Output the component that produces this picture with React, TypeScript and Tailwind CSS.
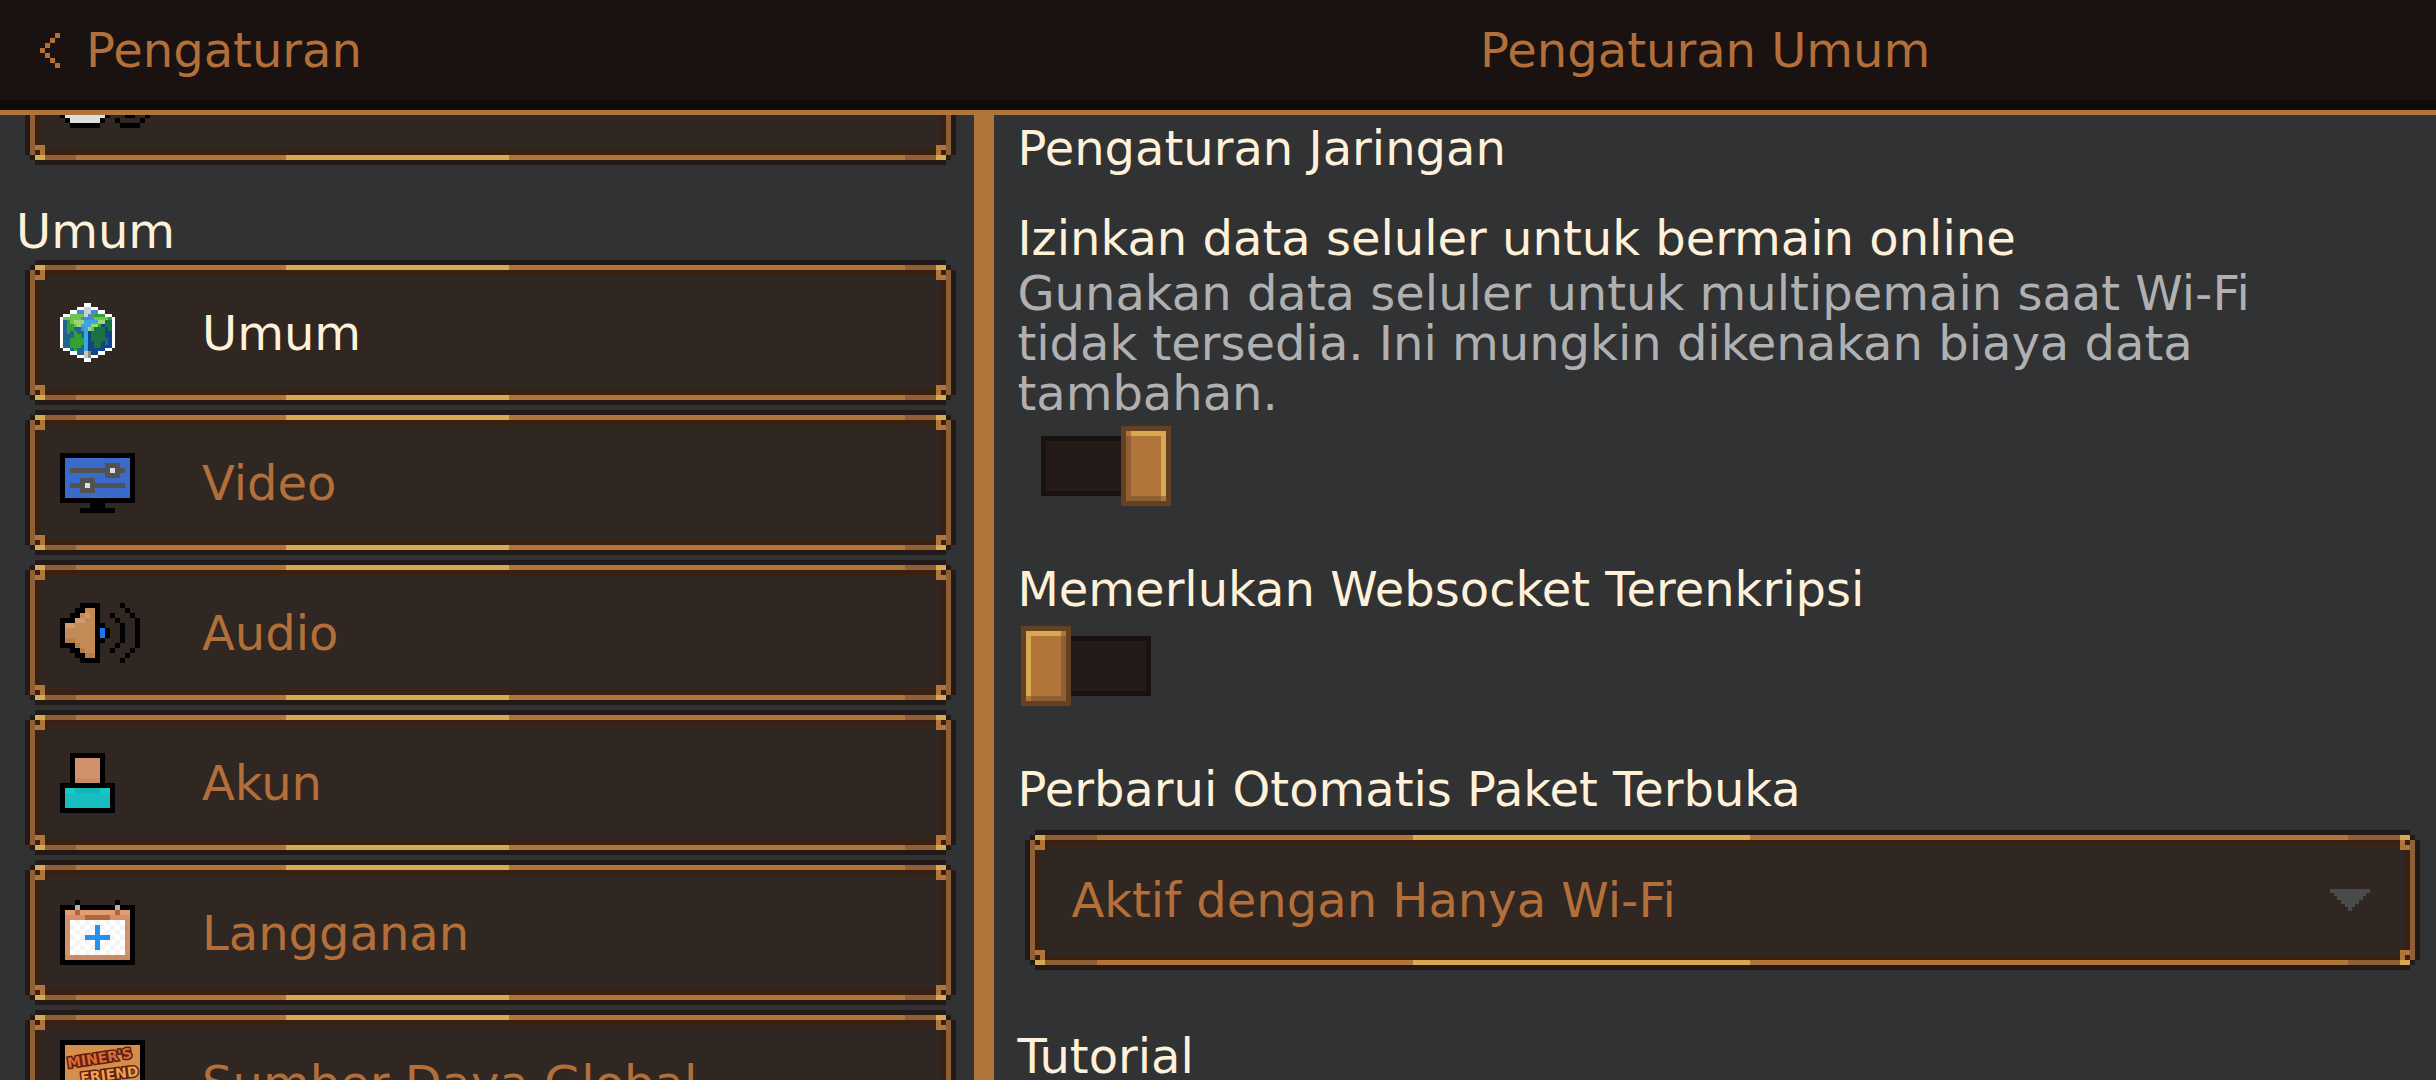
import { useId, useState } from "react";
import type { ReactNode } from "react";

const palette: Record<string, string> = {
  K: "#000000",
  W: "#ffffff",
  w: "#dedede",
  f: "#f5f4f3",
  b: "#3a6bcb",
  g: "#525252",
  o: "#c28a55",
  h: "#cf9b6e",
  d: "#b87c47",
  B: "#1a78f5",
  s: "#d2916d",
  S: "#c88b66",
  t: "#16bfbe",
  T: "#18c8c4",
  u: "#14b7b6",
  a: "#b3b3b3",
  n: "#ad683c",
  O: "#e39d70",
  p: "#2490f0",
};

const globePalette: Record<string, string> = {
  W: "#ffffff",
  L: "#c2d4d4",
  B: "#4f87cc",
  g: "#6cc552",
  G: "#33a036",
  D: "#1d7044",
  T: "#22648f",
  p: "#9fd672",
  c: "#3ba7e0",
  N: "#11458a",
  S: "#c6c6c6",
  s: "#888888",
};

const profileRows = [
  "..KKKKKK..........",
  ".KwwwwwwK.........",
  "KwwwwwwwwK........",
  "KwwwwwwwwK........",
  "KwwwwwwwwK........",
  ".KwwwwwwK.........",
  "..KKKKKK..........",
  "..KwwwwK....KKKK..",
  ".KwwwwwwK..K....K.",
  "KwwwwwwwwK.K.KK..K",
  "KwwwwwwwwK.K.KK..K",
  "KwwwwwwwwK...KK..K",
  ".KwwwwwwK..K....K.",
  "..KKKKKK....KKKK..",
];

const globeRows = [
  ".......WW.......",
  ".....WWLLWW.....",
  "...WWBBLLBBWW...",
  ".WWggggLBBGGGWW.",
  "WgggggBBBBggggGW",
  "WTGgpppccccppDDW",
  "WTGGgpcccppGNDDW",
  "WTGGTTBcpgDDDNDW",
  "WTGTGTTcNDDDDNNW",
  "WTTTGGTcNDDDDNNW",
  "WTTGGGGcNDDDDTNW",
  "WTTGGGGcNNDDNTNW",
  "WTTGGGTcNNDDNNNW",
  ".WWTGTTcNNNNNWW.",
  "...WWTTSsNNWW...",
  ".....WWSsWW.....",
  ".......WW.......",
];

const videoRows = [
  "KKKKKKKKKKKKKKK",
  "KbbbbbbbbbbbbbK",
  "KbbbbbbbbgggbbK",
  "KbggggggggwggbK",
  "KbbbbbbbbgggbbK",
  "KbbbgggbbbbbbbK",
  "KbgggwgggggggbK",
  "KbbbgggbbbbbbbK",
  "KbbbbbbbbbbbbbK",
  "KKKKKKKKKKKKKKK",
  "......KKK......",
  "....KKKKKKK....",
];

const audioRows = [
  "....KKKK....K...",
  "...KKooK.....K..",
  "..KKohoK..K...K.",
  "KKKhhooK...K...K",
  "KhhooooKK...K..K",
  "KooooooKBK..K..K",
  "KooooooKBK..K..K",
  "KddooooKK...K..K",
  "KKKdoooK...K...K",
  "..KKdooK..K...K.",
  "...KKddK.....K..",
  "....KKKK....K...",
];

const accountRows = [
  "..KKKKKKK..",
  "..KsssssK..",
  "..KsssssK..",
  "..KsssssK..",
  "..KsssssK..",
  "..KSSSSSK..",
  "KKKKKKKKKKK",
  "KTTuuuuuTTK",
  "KtttttttttK",
  "KtttttttttK",
  "KtttttttttK",
  "KKKKKKKKKKK",
];

const subscriptionRows = [
  "...K.......K...",
  "KKKaKKKKKKKaKKK",
  "KOOnOOOOOOOnOOK",
  "KssssnnnnnssssK",
  "KsWfWfWfWfWfWsK",
  "KsfWfWfpfWfWfsK",
  "KsWfWfWpWfWfWsK",
  "KsfWfpppppfWfsK",
  "KsWfWfWpWfWfWsK",
  "KsfWfWfpfWfWfsK",
  "KsWfWfWfWfWfWsK",
  "KSSSSSSSSSSSSSK",
  "KKKKKKKKKKKKKKK",
];

const chevronRows = ["...x", "..x.", ".x..", "x...", ".x..", "..x.", "...x"];

function PixelIcon({
  rows,
  colors = palette,
  className,
}: {
  rows: string[];
  colors?: Record<string, string>;
  className: string;
}) {
  return (
    <svg
      className={className}
      viewBox={`0 0 ${rows[0].length} ${rows.length}`}
      shapeRendering="crispEdges"
      aria-hidden="true"
    >
      {rows.map((row, y) =>
        row.split("").map((cell, x) =>
          cell in colors ? (
            <rect key={`${x}-${y}`} x={x} y={y} width="1" height="1" fill={colors[cell]} />
          ) : null
        )
      )}
    </svg>
  );
}

function ResourcePackIcon() {
  return (
    <svg className="w-[85px] h-[85px]" viewBox="0 0 85 85" aria-hidden="true">
      <rect width="85" height="85" fill="#000" />
      <rect x="5" y="5" width="75" height="75" fill="#d58f4a" />
      <ellipse cx="40" cy="62" rx="30" ry="22" fill="#e9b25e" />
      <g
        fontFamily="'DejaVu Sans', sans-serif"
        fontWeight="bold"
        fontSize="14"
        stroke="#5c1f10"
        strokeWidth="3"
        paintOrder="stroke"
      >
        <text x="8" y="28" fill="#dd6a37" transform="rotate(-9 8 28)">
          MINER'S
        </text>
        <text x="21" y="43" fill="#f0a050" transform="rotate(-7 21 43)">
          FRIEND
        </text>
      </g>
      <path d="M66 50h4v-4h3v8h-7z" fill="#3f7d22" />
    </svg>
  );
}

function Corner({ className }: { className: string }) {
  return (
    <svg className={className} viewBox="0 0 2 3" shapeRendering="crispEdges" aria-hidden="true">
      <rect width="2" height="3" fill="#b27539" />
      <rect width="2" height="1" fill="#d8a953" />
      <rect y="1" width="1" height="1" fill="#3a2010" />
    </svg>
  );
}

// Copper frame: every layer shares one grid cell and is inset by its margin.
function Frame({ children }: { children: ReactNode }) {
  return (
    <span className="grid w-full h-full *:col-start-1 *:row-start-1">
      <span className="mx-[10px] bg-[#231a18]" />
      <span className="my-[10px] bg-[#231a18]" />
      <span className="m-[5px] bg-[#231a18]" />
      <span className="mx-[5px] my-[10px] bg-[#8f5f35]" />
      <span className="mx-[10px] my-[5px] bg-[linear-gradient(90deg,#8f5f35_4.5%,#b27539_4.5%,#b27539_27.5%,#d8a953_27.5%,#d8a953_52%,#b27539_52%,#b27539_95.5%,#8f5f35_95.5%)]" />
      <span className="m-[10px] bg-[#3a2010]" />
      <span className="m-[15px] bg-[#302622]" />
      <Corner className="w-[10px] h-[15px] mx-[10px] my-[5px]" />
      <Corner className="w-[10px] h-[15px] mx-[10px] my-[5px] justify-self-end -scale-x-100" />
      <Corner className="w-[10px] h-[15px] mx-[10px] my-[5px] self-end -scale-y-100" />
      <Corner className="w-[10px] h-[15px] mx-[10px] my-[5px] self-end justify-self-end -scale-100" />
      {children}
    </span>
  );
}

type Section = { name: string; icon: ReactNode };

const sections: Section[] = [
  { name: "Umum", icon: <PixelIcon rows={globeRows} colors={globePalette} className="w-[55px] h-[59px]" /> },
  { name: "Video", icon: <PixelIcon rows={videoRows} className="w-[75px] h-[60px]" /> },
  { name: "Audio", icon: <PixelIcon rows={audioRows} className="w-[80px] h-[60px]" /> },
  { name: "Akun", icon: <PixelIcon rows={accountRows} className="w-[55px] h-[60px]" /> },
  { name: "Langganan", icon: <PixelIcon rows={subscriptionRows} className="w-[75px] h-[65px]" /> },
  { name: "Sumber Daya Global", icon: <ResourcePackIcon /> },
];

function SectionButton({
  icon,
  name,
  active,
  onClick,
}: {
  icon: ReactNode;
  name?: string;
  active?: boolean;
  onClick?: () => void;
}) {
  return (
    <button
      type="button"
      className="block w-full h-[145px] shrink-0 text-left cursor-pointer"
      aria-label={name ? undefined : "Profil"}
      onClick={onClick}
    >
      <Frame>
        <span className="flex items-center pl-[35px]">
          <span className="w-[142px] shrink-0">{icon}</span>
          {name && <span className={active ? "text-[#fff1d9]" : "text-[#b26f3a]"}>{name}</span>}
        </span>
      </Frame>
    </button>
  );
}

function Toggle({ id, defaultChecked = false }: { id: string; defaultChecked?: boolean }) {
  const [checked, setChecked] = useState(defaultChecked);

  return (
    <span className="grid w-[150px] h-[80px] *:col-start-1 *:row-start-1">
      <svg
        className={checked ? "w-full h-full -scale-x-100" : "w-full h-full"}
        viewBox="0 0 30 16"
        shapeRendering="crispEdges"
        aria-hidden="true"
      >
        <rect x="6" y="2" width="20" height="12" fill="#1a1210" />
        <rect x="7" y="3" width="18" height="10" fill="#241a18" />
        <rect width="10" height="16" fill="#654122" />
        <rect x="1" y="1" width="8" height="14" fill="#b27539" />
        <rect x="1" y="1" width="7" height="1" fill="#d8a953" />
        <rect x="1" y="1" width="1" height="13" fill="#d8a953" />
        <rect x="8" y="2" width="1" height="13" fill="#8f5f35" />
        <rect x="2" y="14" width="7" height="1" fill="#8f5f35" />
      </svg>
      <input
        id={id}
        type="checkbox"
        role="switch"
        className="w-full h-full opacity-0 cursor-pointer"
        checked={checked}
        onChange={(e) => setChecked(e.target.checked)}
      />
    </span>
  );
}

export default function App() {
  const [active, setActive] = useState("Umum");
  const id = useId();

  return (
    <div className="h-screen flex flex-col overflow-hidden bg-[#303234] font-['DejaVu_Sans',sans-serif] text-[48px] leading-[50px] text-[#fff1d9]">
      <header className="shrink-0 flex bg-[#1a1210] border-b-5 border-[#b27539] text-[#b26f3a]">
        <div className="w-2/5 border-b-10 border-[#0f0b09]">
          <button type="button" className="h-[100px] pl-[40px] flex items-center gap-[26px] cursor-pointer">
            <PixelIcon rows={chevronRows} colors={{ x: "#b26f3a" }} className="w-[20px] h-[35px]" />
            Pengaturan
          </button>
        </div>
        <h1 className="flex-1 h-[110px] flex items-center justify-center border-b-10 border-[#0f0b09]">
          Pengaturan Umum
        </h1>
      </header>

      <div className="flex-1 min-h-0 flex">
        <nav className="w-2/5 shrink-0 overflow-hidden flex flex-col">
          <div className="-mt-[95px] pl-[25px] pr-[18px]">
            <SectionButton icon={<PixelIcon rows={profileRows} className="w-[90px] h-[70px]" />} />
          </div>
          <h2 className="mt-[41px] mb-1 pl-4">Umum</h2>
          <div className="pl-[25px] pr-[18px] flex flex-col gap-[5px]">
            {sections.map((section) => (
              <SectionButton
                key={section.name}
                icon={section.icon}
                name={section.name}
                active={section.name === active}
                onClick={() => setActive(section.name)}
              />
            ))}
          </div>
        </nav>

        <div className="w-5 shrink-0 bg-[#b27539]" />

        <main className="flex-1 min-w-0 overflow-hidden pt-2 pl-[23px] pr-4 flex flex-col">
          <h2>Pengaturan Jaringan</h2>

          <label htmlFor={`${id}-data`} className="mt-10">
            Izinkan data seluler untuk bermain online
          </label>
          <p className="mt-[5px] mb-2 max-w-[1300px] text-[#b0b0b0]">
            Gunakan data seluler untuk multipemain saat Wi-Fi tidak tersedia. Ini mungkin dikenakan biaya data
            tambahan.
          </p>
          <div className="pl-1">
            <Toggle id={`${id}-data`} defaultChecked />
          </div>

          <label htmlFor={`${id}-socket`} className="mt-[58px] mb-3">
            Memerlukan Websocket Terenkripsi
          </label>
          <div className="pl-1">
            <Toggle id={`${id}-socket`} />
          </div>

          <label htmlFor={`${id}-packs`} className="mt-[58px] mb-4">
            Perbarui Otomatis Paket Terbuka
          </label>
          <div className="h-[140px] shrink-0 pl-2">
            <Frame>
              <select
                id={`${id}-packs`}
                className="appearance-none bg-transparent pl-[46px] leading-[70px] text-[#b26f3a] cursor-pointer"
                defaultValue="wifi"
              >
                <option value="wifi">Aktif dengan Hanya Wi-Fi</option>
              </select>
              <svg
                className="w-[40px] h-[22px] mr-[50px] self-center justify-self-end pointer-events-none"
                viewBox="0 0 40 22"
                shapeRendering="crispEdges"
                aria-hidden="true"
              >
                <path
                  d="M0 0H40V4H36V7H33V11H29V15H25V18H22V22H18V18H15V15H11V11H7V7H4V4H0Z"
                  fill="#4b4b4b"
                />
              </svg>
            </Frame>
          </div>

          <h2 className="mt-[61px]">Tutorial</h2>
        </main>
      </div>
    </div>
  );
}
